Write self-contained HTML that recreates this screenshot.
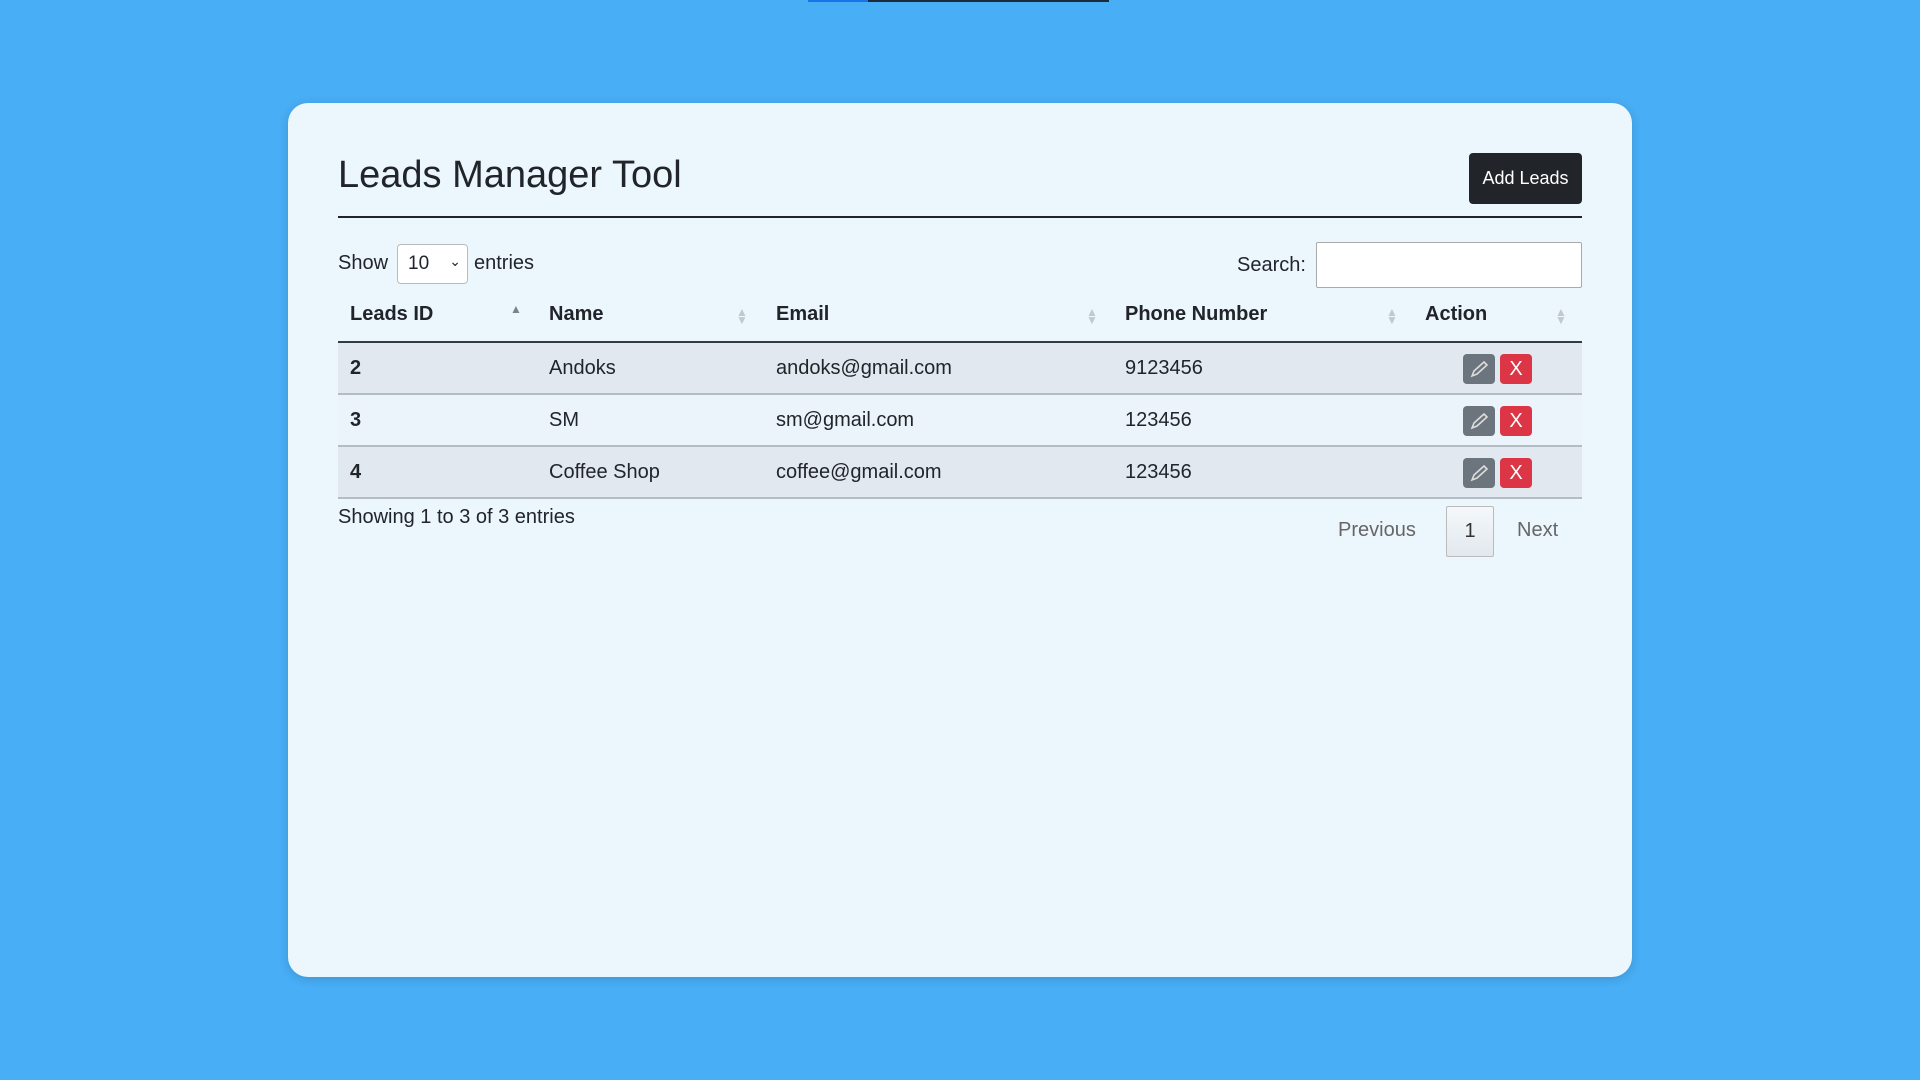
<!DOCTYPE html>
<html><head><style>
*{box-sizing:border-box;margin:0;padding:0}
body{width:1920px;height:1080px;background:#48aef6;font-family:"Liberation Sans",sans-serif;color:#212529;position:relative;overflow:hidden}
.bar{position:absolute;top:0;left:808px;width:301px;height:2px;background:#1d2a3a}
.bar i{position:absolute;left:0;top:0;width:60px;height:2px;background:#1a73e8}
.card{position:absolute;left:288px;top:103px;width:1344px;height:874px;background:#ecf7fd;border-radius:20px;box-shadow:0 2px 10px rgba(0,0,0,.15)}
.abs{position:absolute}
h1{position:absolute;left:50px;top:150px;font-size:38px;font-weight:normal;line-height:44px;top:50px}
.btn{position:absolute;left:1181px;top:50px;width:113px;height:51px;background:#212529;color:#fff;border-radius:4px;font-size:18px;display:flex;align-items:center;justify-content:center}
.hr{position:absolute;left:50px;top:113px;width:1244px;height:2px;background:#212529}
.t{font-size:20px;position:absolute}
.sel{position:absolute;left:109px;top:141px;width:71px;height:40px;border:1px solid #bbb;border-radius:4px;background:#fff;font-size:19px;padding:8px 10px}
.inp{position:absolute;left:1028px;top:139px;width:266px;height:46px;border:1px solid #aaa;border-radius:2px;background:#fff}
.row{position:absolute;left:50px;width:1244px;height:52px;border-bottom:2px solid #b4bcc4}
.th{font-weight:bold;font-size:20px;position:absolute}
.sort{position:absolute;color:#c3c8cd;font-size:12px;line-height:8px}
.e{position:absolute;width:32px;height:30px;background:#6c757d;border-radius:4px}
.x{position:absolute;width:32px;height:30px;background:#dc3545;border-radius:4px;color:#fff;font-size:20px;text-align:center;line-height:30px}
</style></head><body>
<div class="bar"><i></i></div>
<div class="card">
<h1>Leads Manager Tool</h1>
<div class="btn">Add Leads</div>
<div class="hr"></div>
<div class="t" style="left:50px;top:149px">Show</div>
<div class="sel">10<span style="position:absolute;right:6px;top:8px;font-size:14px">&#8964;</span></div>
<div class="t" style="left:186px;top:149px">entries</div>
<div class="t" style="left:949px;top:151px">Search:</div>
<div class="inp"></div>
<div class="row" style="top:188px;height:52px;border-bottom:2px solid #333a40"></div>
<div class="th" style="left:62px;top:200px">Leads ID</div>
<div class="th" style="left:261px;top:200px">Name</div>
<div class="th" style="left:488px;top:200px">Email</div>
<div class="th" style="left:837px;top:200px">Phone Number</div>
<div class="th" style="left:1137px;top:200px">Action</div>
<div class="sort" style="left:222px;top:202px;color:#7d8389">▲</div>
<div class="sort" style="left:448px;top:205px">▲<br>▼</div>
<div class="sort" style="left:798px;top:205px">▲<br>▼</div>
<div class="sort" style="left:1098px;top:205px">▲<br>▼</div>
<div class="sort" style="left:1267px;top:205px">▲<br>▼</div>

<div class="row" style="top:240px;background:#e1e8ef"></div>
<div class="row" style="top:292px;background:#ebf4fa"></div>
<div class="row" style="top:344px;background:#e1e8ef"></div>

<div class="th" style="left:62px;top:254px">2</div>
<div class="t" style="left:261px;top:254px">Andoks</div>
<div class="t" style="left:488px;top:254px">andoks@gmail.com</div>
<div class="t" style="left:837px;top:254px">9123456</div>
<div class="th" style="left:62px;top:306px">3</div>
<div class="t" style="left:261px;top:306px">SM</div>
<div class="t" style="left:488px;top:306px">sm@gmail.com</div>
<div class="t" style="left:837px;top:306px">123456</div>
<div class="th" style="left:62px;top:358px">4</div>
<div class="t" style="left:261px;top:358px">Coffee Shop</div>
<div class="t" style="left:488px;top:358px">coffee@gmail.com</div>
<div class="t" style="left:837px;top:358px">123456</div>

<div class="e" style="left:1175px;top:251px"><svg width="32" height="30"><path d="M9 22 L11 17 L21 8 L24 11 L14 20 Z" fill="none" stroke="#ddd" stroke-width="1.6"/></svg></div>
<div class="x" style="left:1212px;top:251px">X</div>
<div class="e" style="left:1175px;top:303px"><svg width="32" height="30"><path d="M9 22 L11 17 L21 8 L24 11 L14 20 Z" fill="none" stroke="#ddd" stroke-width="1.6"/></svg></div>
<div class="x" style="left:1212px;top:303px">X</div>
<div class="e" style="left:1175px;top:355px"><svg width="32" height="30"><path d="M9 22 L11 17 L21 8 L24 11 L14 20 Z" fill="none" stroke="#ddd" stroke-width="1.6"/></svg></div>
<div class="x" style="left:1212px;top:355px">X</div>

<div class="t" style="left:50px;top:403px">Showing 1 to 3 of 3 entries</div>
<div class="t" style="left:1050px;top:416px;color:#666">Previous</div>
<div class="abs" style="left:1158px;top:403px;width:48px;height:51px;border:1px solid #bbb;border-radius:2px;background:linear-gradient(#f4f8fb,#e2e8ee);font-size:20px;text-align:center;line-height:49px;color:#333">1</div>
<div class="t" style="left:1229px;top:416px;color:#666">Next</div>
</div>
</body></html>
